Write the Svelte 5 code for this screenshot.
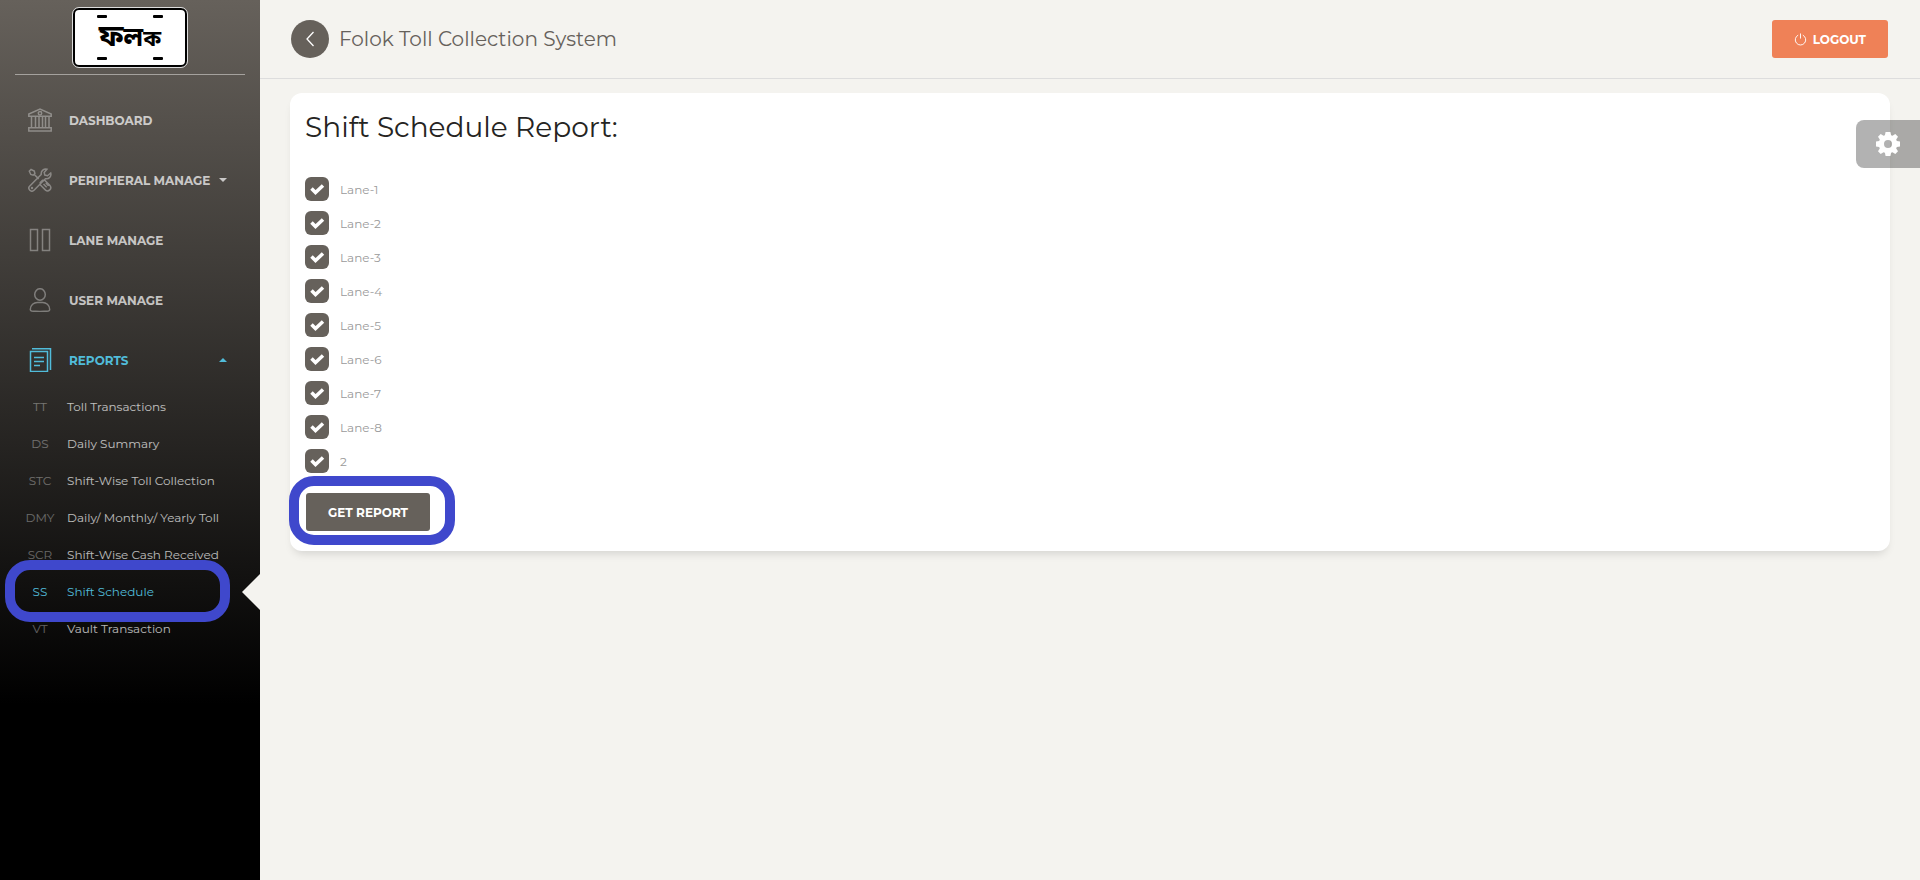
<script>
  let reportsOpen = $state(true)
  let peripheralOpen = $state(false)

  const reports = [
    { short: 'TT', name: 'Toll Transactions' },
    { short: 'DS', name: 'Daily Summary' },
    { short: 'STC', name: 'Shift-Wise Toll Collection' },
    { short: 'DMY', name: 'Daily/ Monthly/ Yearly Toll' },
    { short: 'SCR', name: 'Shift-Wise Cash Received' },
    { short: 'SS', name: 'Shift Schedule', active: true },
    { short: 'VT', name: 'Vault Transaction' }
  ]

  let lanes = $state(
    ['Lane-1', 'Lane-2', 'Lane-3', 'Lane-4', 'Lane-5', 'Lane-6', 'Lane-7', 'Lane-8', '2'].map(
      (name) => ({ name, checked: true })
    )
  )
</script>

<div class="wrapper">
  <aside class="sidebar">
    <div class="logo">
      <a href="#home" class="plate">
        <span class="bolts"><i></i><i></i></span>
        <span class="plate-text" lang="bn"><b>ফ</b><b>ল</b><b>ক</b></span>
        <span class="bolts"><i></i><i></i></span>
      </a>
    </div>

    <nav>
      <ul class="nav">
        <li>
          <a href="#dashboard" class="nav-link">
            <svg viewBox="0 0 24 24">
              <path d="M.8 8.200V6L12 1l11.200 5v2.200zM3.500 8.500v10.800M7.500 8.500v10.800M11 8.500v10.800M14.500 8.500v10.800M17.500 8.500v10.800M21 8.500v10.800M.8 23v-3.300h22.400V23z" />
              <circle cx="12" cy="5.300" r="1.700" />
            </svg>
            <span>Dashboard</span>
          </a>
        </li>
        <li>
          <button
            class="nav-link"
            aria-expanded={peripheralOpen}
            onclick={() => (peripheralOpen = !peripheralOpen)}
          >
            <svg viewBox="0 0 24 24">
              <path d="M3 1.500 1.300 3.200l1.500 3.300 2.400.7 1.700-1.700-.6-2.400zM6.500 6.700l4.200 4.200M13.300 13.500l1.200-1.200h2.200l5.300 5.300a3.200 3.200 0 0 1-4.500 4.500l-5.300-5.300v-2.200zM15.500 16l3.200 3.200M17.800 15l2.700 2.700M22.700 5l-3.200 2.700-2.700-.6-.6-2.600L19 1.200c-3-.8-6.200 1.500-5.800 5.300L1.800 18a2.900 2.900 0 0 0 4.200 4.200L17.400 10.700c3.500.6 6.300-2.200 5.300-5.700z" />
              <circle cx="4" cy="20" r=".5" />
            </svg>
            <span>Peripheral Manage</span>
            <b class="caret" class:up={peripheralOpen}></b>
          </button>
        </li>
        <li>
          <a href="#lanes" class="nav-link">
            <svg viewBox="0 0 24 24"><path d="M2.500 1.500h7v21h-7zM14.500 1.500h7v21h-7z" /></svg>
            <span>Lane Manage</span>
          </a>
        </li>
        <li>
          <a href="#users" class="nav-link">
            <svg viewBox="0 0 24 24">
              <ellipse cx="12" cy="6.500" rx="5.300" ry="5.800" />
              <path d="M2.300 21.500c0-4.500 3.700-7 7-7h5.400c3.300 0 7 2.500 7 7 0 .8-.5 1.300-1.300 1.500-5 .5-11.800.5-16.800 0-.8-.2-1.300-.7-1.300-1.500z" />
            </svg>
            <span>User Manage</span>
          </a>
        </li>
        <li>
          <button
            class="nav-link active"
            aria-expanded={reportsOpen}
            onclick={() => (reportsOpen = !reportsOpen)}
          >
            <svg viewBox="0 0 24 24">
              <path d="M2.500 3.500h17v20h-17zM4 .7h18.500V22M6 9.500h10M6 13.500h10M6 17.500h6" />
            </svg>
            <span>Reports</span>
            <b class="caret" class:up={reportsOpen}></b>
          </button>
          {#if reportsOpen}
            <ul class="subnav">
              {#each reports as item}
                <li>
                  <a href="#{item.short.toLowerCase()}" class:active={item.active}>
                    <span class="mini">{item.short}</span>
                    <span class="name">{item.name}</span>
                  </a>
                </li>
              {/each}
            </ul>
          {/if}
        </li>
      </ul>
    </nav>
  </aside>

  <div class="main">
    <header>
      <button class="back" aria-label="Back">
        <svg viewBox="0 0 16 16"><path d="M11.500 1 5 8l6.500 7" /></svg>
      </button>
      <a href="#home" class="brand">Folok Toll Collection System</a>
      <button class="btn logout">
        <svg viewBox="0 0 14 14"><path d="M4.500 2.300a5.600 5.600 0 1 0 5 0M7 .5v5.500" /></svg>
        Logout
      </button>
    </header>

    <main>
      <section class="card">
        <h3>Shift Schedule Report:</h3>
        <div class="lanes">
          {#each lanes as lane}
            <label>
              <input type="checkbox" bind:checked={lane.checked} />
              <svg viewBox="0 0 24 24"><path d="m6.500 11.500 4 4 7.500-7" /></svg>
              <span>{lane.name}</span>
            </label>
          {/each}
        </div>
        <div class="actions">
          <button class="btn report">Get Report</button>
        </div>
      </section>
    </main>
  </div>

  <button class="settings" aria-label="Settings">
    <svg viewBox="0 0 24 24">
      <path
        fill-rule="evenodd"
        d="M9.600 0h4.800l.7 3.200 1.400.6 2.800-1.800 2.700 2.700-1.800 2.800.6 1.400 3.200.7v4.800l-3.200.7-.6 1.400 1.800 2.800-2.700 2.700-2.800-1.800-1.400.6-.7 3.200H9.600l-.7-3.200-1.400-.6L4.700 22 2 19.300l1.800-2.800-.6-1.400L0 14.400V9.600l3.200-.7.6-1.400L2 4.700 4.700 2l2.800 1.800 1.400-.6zM12 8a4 4 0 1 0 0 8 4 4 0 0 0 0-8z"
      />
    </svg>
  </button>
</div>

<style>
  :global(body) {
    margin: 0;
    background: #f4f3ef;
  }

  .wrapper {
    display: flex;
    min-height: 100vh;
    font-family: Montserrat, Inter, 'Open Sans', sans-serif;
    font-size: 14px;
    color: #252422;
  }

  button {
    border: 0;
    font-family: inherit;
    cursor: pointer;
  }

  a {
    text-decoration: none;
  }

  ul {
    list-style: none;
    margin: 0;
    padding: 0;
  }

  svg {
    fill: none;
    stroke: currentColor;
  }

  /* sidebar */
  .sidebar {
    position: relative;
    width: 260px;
    flex-shrink: 0;
    background: linear-gradient(#66615b 0%, #000 80%);
  }

  .logo {
    display: flex;
    justify-content: center;
    margin: 0 15px;
    padding: 8px 0 7px;
    border-bottom: 1px solid #a5a29e;
  }

  .plate {
    display: flex;
    flex-direction: column;
    justify-content: space-between;
    box-sizing: border-box;
    width: 114px;
    height: 59px;
    padding: 5px 22px;
    border: 2px solid #000;
    border-radius: 6px;
    outline: 1px solid #ddd;
    background: #fff;
    color: #000;
  }

  .bolts {
    display: flex;
    justify-content: space-between;
  }

  .bolts i {
    width: 10px;
    height: 3px;
    border-radius: 1px;
    background: #000;
  }

  .plate-text {
    display: flex;
    align-items: baseline;
    justify-content: center;
    height: 30px;
    line-height: 30px;
    font-family: 'Noto Sans Bengali', 'Noto Sans', sans-serif;
  }

  .plate-text b {
    font-size: 30px;
  }

  .plate-text b + b {
    font-size: 26px;
  }

  .plate-text b + b + b {
    font-size: 22px;
  }

  .nav {
    padding-top: 10px;
  }

  .nav-link {
    display: flex;
    align-items: center;
    box-sizing: border-box;
    width: 230px;
    height: 50px;
    margin: 10px 15px 0;
    padding: 0 15px 0 13px;
    background: none;
    color: #fff;
    font-size: 12px;
    font-weight: 700;
    text-transform: uppercase;
    opacity: 0.7;
  }

  .nav-link svg {
    width: 24px;
    height: 24px;
    margin-right: 17px;
    opacity: 0.5;
    stroke-width: 1.5;
  }

  .nav-link.active,
  .subnav .active {
    color: #51bcda;
    opacity: 1;
  }

  .nav-link.active svg {
    opacity: 1;
  }

  .caret {
    margin-left: auto;
    margin-right: 3px;
    border: 4px solid transparent;
    border-top-color: currentColor;
    border-bottom: 0;
  }

  .caret.up {
    border-top: 0;
    border-bottom: 4px solid currentColor;
  }

  .subnav {
    padding-top: 3px;
  }

  .subnav a {
    display: flex;
    align-items: center;
    height: 37px;
    padding-left: 20px;
    color: #fff;
    font-size: 12px;
    opacity: 0.7;
  }

  .subnav li {
    position: relative;
  }

  .mini {
    width: 40px;
    margin-right: 7px;
    text-align: center;
    opacity: 0.5;
  }

  .subnav a.active,
  .active .mini {
    opacity: 1;
  }

  .subnav a.active {
    color: #51bcda;
  }

  /* marker ring and page notch around the current report */
  .subnav .active::before {
    content: '';
    position: absolute;
    z-index: 1;
    inset: -13px 30px -12px 5px;
    border: 10px solid #3f48cc;
    border-radius: 25px;
  }

  .subnav .active::after {
    content: '';
    position: absolute;
    top: 1px;
    right: 0;
    border: 18px solid transparent;
    border-right-color: #f4f3ef;
    border-left: 0;
  }

  /* top bar */
  .main {
    flex: 1;
    min-width: 0;
  }

  header {
    display: flex;
    align-items: center;
    padding: 20px 32px 20px 31px;
    border-bottom: 1px solid #ddd;
  }

  .back {
    display: flex;
    align-items: center;
    justify-content: center;
    width: 38px;
    height: 38px;
    padding: 0;
    border-radius: 50%;
    background: #66615b;
    color: #fff;
  }

  .back svg {
    width: 16px;
    height: 16px;
    stroke-width: 1.3;
  }

  .brand {
    margin-left: 10px;
    color: #66615b;
    font-size: 20px;
    font-weight: 400;
  }

  .btn {
    display: flex;
    align-items: center;
    justify-content: center;
    height: 38px;
    padding: 0 22px;
    border-radius: 3px;
    color: #fff;
    font-size: 12px;
    font-weight: 700;
    text-transform: uppercase;
  }

  .logout {
    margin-left: auto;
    gap: 6px;
    background: #ef8157;
  }

  .logout svg {
    width: 13px;
    height: 13px;
  }

  /* report card */
  main {
    padding: 14px 30px;
  }

  .card {
    padding: 15px 15px 20px;
    border-radius: 12px;
    background: #fff;
    box-shadow: 0 6px 10px -4px rgba(0, 0, 0, 0.15);
  }

  h3 {
    margin: 0 0 30px;
    font-size: 28px;
    font-weight: 400;
    line-height: 39px;
  }

  .lanes {
    display: flex;
    flex-direction: column;
    gap: 10px;
  }

  label {
    display: flex;
    align-items: center;
    position: relative;
    width: max-content;
    height: 24px;
    color: #9a9a9a;
    font-size: 12px;
    cursor: pointer;
  }

  label input {
    appearance: none;
    width: 24px;
    height: 24px;
    margin: 0 11px 0 0;
    border-radius: 6px;
    background: #66615b;
  }

  label svg {
    position: absolute;
    left: 0;
    width: 24px;
    height: 24px;
    color: #fff;
    stroke-width: 3.5;
    visibility: hidden;
    pointer-events: none;
  }

  input:checked + svg {
    visibility: visible;
  }

  .actions {
    position: relative;
    width: max-content;
    margin-top: 20px;
    padding-left: 1px;
  }

  .actions::after {
    content: '';
    position: absolute;
    inset: -17px -25px -14px -16px;
    border: 10px solid #3f48cc;
    border-radius: 25px;
    pointer-events: none;
  }

  .report {
    background: #66615b;
  }

  .settings {
    position: fixed;
    top: 120px;
    right: 0;
    display: flex;
    align-items: center;
    justify-content: center;
    width: 64px;
    height: 48px;
    padding: 0;
    border-radius: 8px 0 0 8px;
    background: rgba(0, 0, 0, 0.3);
    color: #fff;
  }

  .settings svg {
    width: 24px;
    height: 24px;
    fill: currentColor;
    stroke: none;
  }
</style>
